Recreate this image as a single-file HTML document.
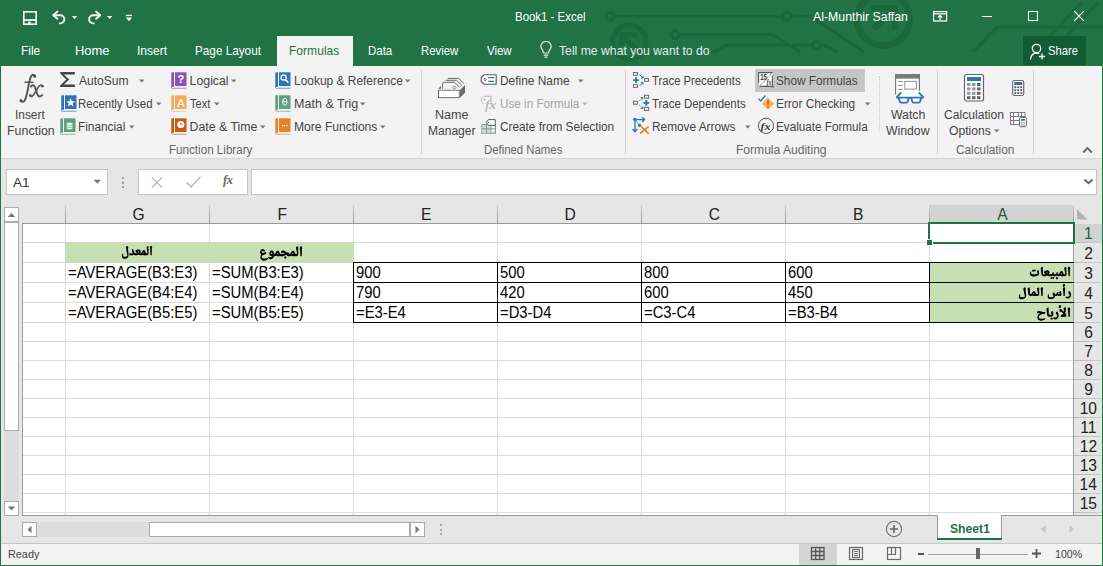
<!DOCTYPE html><html><head><meta charset="utf-8"><style>
html,body{margin:0;padding:0;}
body{width:1103px;height:566px;overflow:hidden;position:relative;font-family:"Liberation Sans",sans-serif;}
div{position:absolute;white-space:nowrap;}
</style></head><body>
<div style="left:0px;top:0px;width:1103px;height:566px;background:#fff"></div>
<div style="left:0px;top:0px;width:1103px;height:66px;background:#217346"></div>
<svg style="position:absolute;left:0px;top:0px;" width="1103" height="66" viewBox="0 0 1103 66"><g fill="none" stroke="#1c673c" stroke-width="3" stroke-linecap="butt">
<path d="M614 16.3 H783 M791.5 16.3 H811 L864 52"/>
<circle cx="610" cy="16.3" r="3.9"/>
<circle cx="787" cy="16.3" r="4.1"/>
<path d="M679 34.5 H772.5 L800 52"/>
<circle cx="675" cy="34.5" r="3.9"/>
<path d="M712.5 52 L726.5 45.3 H812.5 M820.5 45.3 H824.5 L837.5 52"/>
<circle cx="816.5" cy="45.3" r="4.1"/>
<path d="M973 52 L997 27.2 H1103"/>
<path d="M1050.5 35.5 L1082 2 M1067 35.5 L1098 2"/>
<circle cx="629.3" cy="42" r="16.8" stroke-width="5"/>
<circle cx="883.4" cy="19.4" r="26.2" stroke-width="6.8"/>
</g>
<g fill="#1c673c">
<path d="M619.4 32 H637 L637 37 H627.5 L640 49.5 L636.3 53.2 L624.5 41.2 V44.7 H619.4 Z"/>
<path d="M898 4.9 V29 H892 V15 L876 31 L871.5 26.5 L887.5 10.7 H871 V4.9 Z"/>
</g></svg>
<svg style="position:absolute;left:18px;top:6px;" width="100" height="24" viewBox="18 6 100 24"><rect x="23.8" y="11.8" width="12.4" height="12.4" fill="none" stroke="#fff" stroke-width="1.6"/>
<rect x="23" y="19.2" width="14" height="1.7" fill="#fff"/><rect x="28.2" y="21.6" width="2.4" height="2.6" fill="#fff"/>
<g fill="none" stroke="#f4f4f4" stroke-width="1.9" stroke-linecap="round" stroke-linejoin="round"><path d="M53.5 15.2 H60.3 A4.1 4.1 0 0 1 60.3 23.4 H59.8"/><path d="M57.4 11.6 L53.3 15.2 L57.4 18.8"/>
<path d="M100 15.2 H93.2 A4.1 4.1 0 0 0 93.2 23.4 H93.7"/><path d="M96.1 11.6 L100.2 15.2 L96.1 18.8"/></g>
<path d="M72 16 H77.2 L74.6 19 Z M107 16 H112.2 L109.6 19 Z" fill="#fff"/></svg>
<svg style="position:absolute;left:125px;top:14px;" width="8" height="8" viewBox="0 0 8 8"><rect x="1" y="0.8" width="6" height="1.3" fill="#fff"/><path d="M0.8 3.5 H7.2 L4 7.2 Z" fill="#fff"/></svg>
<div style="left:514.88px;top:10.67px;font-size:12.2px;line-height:12.2px;color:#ffffff;transform:scaleX(0.9381);transform-origin:0 0;">Book1 - Excel</div>
<div style="left:813.30px;top:10.67px;font-size:12.2px;line-height:12.2px;color:#ffffff;transform:scaleX(1.0111);transform-origin:0 0;">Al-Munthir Saffan</div>
<svg style="position:absolute;left:932px;top:10px;" width="16" height="12" viewBox="0 0 16 12"><g fill="none" stroke="#fff" stroke-width="1.2"><rect x="1.6" y="1.6" width="13" height="9.4"/><path d="M1.6 3.8 H14.6"/><path d="M8.1 10.5 V5.5 M6 7.5 L8.1 5.3 L10.2 7.5"/></g></svg>
<div style="left:982px;top:16px;width:10px;height:1px;background:#fff"></div>
<svg style="position:absolute;left:1027px;top:10px;" width="12" height="12" viewBox="0 0 12 12"><rect x="1.5" y="1.5" width="9" height="9" fill="none" stroke="#fff" stroke-width="1.1"/></svg>
<svg style="position:absolute;left:1073px;top:10px;" width="12" height="12" viewBox="0 0 12 12"><path d="M1.2 1.2 L10.8 10.8 M10.8 1.2 L1.2 10.8" stroke="#fff" stroke-width="1.2"/></svg>
<div style="left:21.35px;top:44.23px;font-size:13.2px;line-height:13.2px;color:#ffffff;transform:scaleX(0.8999);transform-origin:0 0;">File</div>
<div style="left:74.96px;top:44.23px;font-size:13.2px;line-height:13.2px;color:#ffffff;transform:scaleX(0.9823);transform-origin:0 0;">Home</div>
<div style="left:136.91px;top:44.23px;font-size:13.2px;line-height:13.2px;color:#ffffff;transform:scaleX(0.9135);transform-origin:0 0;">Insert</div>
<div style="left:195.06px;top:44.23px;font-size:13.2px;line-height:13.2px;color:#ffffff;transform:scaleX(0.8905);transform-origin:0 0;">Page Layout</div>
<div style="left:277px;top:36px;width:76px;height:31px;background:#f3f3f3"></div>
<div style="left:289.03px;top:44.23px;font-size:13.2px;line-height:13.2px;color:#217346;transform:scaleX(0.9154);transform-origin:0 0;">Formulas</div>
<div style="left:367.58px;top:44.23px;font-size:13.2px;line-height:13.2px;color:#ffffff;transform:scaleX(0.8695);transform-origin:0 0;">Data</div>
<div style="left:420.59px;top:44.23px;font-size:13.2px;line-height:13.2px;color:#ffffff;transform:scaleX(0.8594);transform-origin:0 0;">Review</div>
<div style="left:486.94px;top:44.23px;font-size:13.2px;line-height:13.2px;color:#ffffff;transform:scaleX(0.8688);transform-origin:0 0;">View</div>
<svg style="position:absolute;left:539px;top:41px;" width="14" height="18" viewBox="0 0 14 18"><g fill="none" stroke="#e8e8e8" stroke-width="1.2"><path d="M4.5 12 C4.5 9 1.8 8 1.8 5.6 A5.2 5.2 0 0 1 12.2 5.6 C12.2 8 9.5 9 9.5 12 Z"/><path d="M4.8 14.2 H9.2 M5.5 16.2 H8.5"/></g></svg>
<div style="left:558.76px;top:44.23px;font-size:13.2px;line-height:13.2px;color:#e3ebe6;transform:scaleX(0.9254);transform-origin:0 0;">Tell me what you want to do</div>
<div style="left:1023px;top:36px;width:63px;height:29px;background:#115c33"></div>
<svg style="position:absolute;left:1029px;top:43px;" width="18" height="18" viewBox="0 0 18 18"><g fill="none" stroke="#fff" stroke-width="1.3"><circle cx="7.5" cy="5.5" r="4.2"/><path d="M1.5 16.5 C2 12 4.5 10 7.5 10 C8.5 10 9.5 10.3 10.2 10.8"/><path d="M13 10.5 V16.5 M10 13.5 H16"/></g></svg>
<div style="left:1048.49px;top:45.33px;font-size:12.6px;line-height:12.6px;color:#ffffff;transform:scaleX(0.8921);transform-origin:0 0;">Share</div>
<div style="left:0px;top:66px;width:1103px;height:92px;background:#f3f3f3"></div>
<div style="left:0px;top:158px;width:1103px;height:1px;background:#d6d6d6"></div>
<svg style="position:absolute;left:14px;top:70px;" width="34" height="36" viewBox="14 70 34 36"><g fill="none" stroke="#555" stroke-linecap="round">
<path d="M35 76.3 C34.6 74.3 32.2 74.3 31.1 76.3 C29.8 78.8 29 83 28.1 88 C27.2 93 26.2 97.5 24.8 100.3 C23.8 102.2 21.6 102.3 20.7 100.8" stroke-width="1.9"/>
<path d="M25 82.3 H33" stroke-width="1.4"/>
<path d="M30.8 86.6 C32.3 84.6 34.2 84.8 35.1 87.6 L37.3 94.3 C38.2 96.9 40.2 97.3 42.2 95.2" stroke-width="1.9"/>
<path d="M42.6 86.2 C41.4 84.5 39.6 85 38.2 87.2 L34.3 93.6 C32.8 96.2 31.2 97.2 30.2 95.6" stroke-width="1.6"/>
</g><g fill="#555"><circle cx="34.6" cy="76.2" r="1.5"/><circle cx="21" cy="100.4" r="1.5"/><circle cx="42.4" cy="86.3" r="1.3"/><circle cx="30.3" cy="95.4" r="1.3"/></g></svg>
<div style="left:15.23px;top:109.49px;font-size:12.3px;line-height:12.3px;color:#444444;transform:scaleX(0.9668);transform-origin:0 0;">Insert</div>
<div style="left:6.50px;top:125.49px;font-size:12.3px;line-height:12.3px;color:#444444;transform:scaleX(1.0121);transform-origin:0 0;">Function</div>
<svg style="position:absolute;left:59px;top:71px;" width="18" height="17" viewBox="0 0 18 17"><path d="M1.2 1 H15.8 V3.4 H4.9 L10.2 8.5 L4.9 13.6 H15.8 V16 H1.2 V14.6 L7.3 8.5 L1.2 2.4 Z" fill="#444"/></svg>
<div style="left:79.40px;top:75.09px;font-size:12.3px;line-height:12.3px;color:#444444;transform:scaleX(0.9796);transform-origin:0 0;">AutoSum</div>
<svg style="position:absolute;left:138.5px;top:79px;" width="6" height="4" viewBox="0 0 6 4"><path d="M0 0.5 H5.5 L2.75 3.5 Z" fill="#777"/></svg>
<svg style="position:absolute;left:60.5px;top:94.5px;" width="16" height="17" viewBox="0 0 16 17"><path d="M0.3 1.2 Q0.3 0.3 1.2 0.3 H3 V14.8 H1.5 Q1 14.8 1 15.4 H15.5 V16.4 H1.3 Q0.3 16.4 0.3 15.2 Z" fill="#2e74b5"/>
<rect x="4" y="0.3" width="11.5" height="13.7" fill="#2e74b5"/><rect x="1" y="15.1" width="14.5" height="0.6" fill="#fff"/><path d="M9.7 3 L10.9 6.2 L14.2 6.2 L11.6 8.3 L12.5 11.5 L9.7 9.6 L6.9 11.5 L7.8 8.3 L5.2 6.2 L8.5 6.2 Z" fill="#fff"/></svg>
<div style="left:78.48px;top:97.99px;font-size:12.3px;line-height:12.3px;color:#444444;transform:scaleX(0.9319);transform-origin:0 0;">Recently Used</div>
<svg style="position:absolute;left:155.5px;top:102px;" width="6" height="4" viewBox="0 0 6 4"><path d="M0 0.5 H5.5 L2.75 3.5 Z" fill="#777"/></svg>
<svg style="position:absolute;left:59.8px;top:117.8px;" width="16" height="17" viewBox="0 0 16 17"><path d="M0.3 1.2 Q0.3 0.3 1.2 0.3 H3 V14.8 H1.5 Q1 14.8 1 15.4 H15.5 V16.4 H1.3 Q0.3 16.4 0.3 15.2 Z" fill="#5d9f80"/>
<rect x="4" y="0.3" width="11.5" height="13.7" fill="#5d9f80"/><rect x="1" y="15.1" width="14.5" height="0.6" fill="#fff"/><g fill="#fff" stroke="#5d9f80" stroke-width="0.7"><ellipse cx="9.7" cy="10" rx="3.4" ry="1.6"/><ellipse cx="9.7" cy="7.9" rx="3.4" ry="1.6"/><ellipse cx="9.7" cy="5.8" rx="3.4" ry="1.6"/></g></svg>
<div style="left:78.45px;top:121.29px;font-size:12.3px;line-height:12.3px;color:#444444;transform:scaleX(0.9617);transform-origin:0 0;">Financial</div>
<svg style="position:absolute;left:128.5px;top:125px;" width="6" height="4" viewBox="0 0 6 4"><path d="M0 0.5 H5.5 L2.75 3.5 Z" fill="#777"/></svg>
<svg style="position:absolute;left:170.8px;top:71.5px;" width="16" height="17" viewBox="0 0 16 17"><path d="M0.3 1.2 Q0.3 0.3 1.2 0.3 H3 V14.8 H1.5 Q1 14.8 1 15.4 H15.5 V16.4 H1.3 Q0.3 16.4 0.3 15.2 Z" fill="#8655b0"/>
<rect x="4" y="0.3" width="11.5" height="13.7" fill="#8655b0"/><rect x="1" y="15.1" width="14.5" height="0.6" fill="#fff"/><text x="9.8" y="11.3" font-family="Liberation Sans" font-weight="bold" font-size="11" fill="#fff" text-anchor="middle">?</text></svg>
<div style="left:189.62px;top:75.09px;font-size:12.3px;line-height:12.3px;color:#444444;">Logical</div>
<svg style="position:absolute;left:230.5px;top:79px;" width="6" height="4" viewBox="0 0 6 4"><path d="M0 0.5 H5.5 L2.75 3.5 Z" fill="#777"/></svg>
<svg style="position:absolute;left:170.8px;top:94.5px;" width="16" height="17" viewBox="0 0 16 17"><path d="M0.3 1.2 Q0.3 0.3 1.2 0.3 H3 V14.8 H1.5 Q1 14.8 1 15.4 H15.5 V16.4 H1.3 Q0.3 16.4 0.3 15.2 Z" fill="#f0ac5a"/>
<rect x="4" y="0.3" width="11.5" height="13.7" fill="#f0ac5a"/><rect x="1" y="15.1" width="14.5" height="0.6" fill="#fff"/><text x="9.8" y="12" font-family="Liberation Sans" font-size="11" fill="#fff" text-anchor="middle">A</text></svg>
<div style="left:190.38px;top:97.99px;font-size:12.3px;line-height:12.3px;color:#444444;transform:scaleX(0.8963);transform-origin:0 0;">Text</div>
<svg style="position:absolute;left:213.5px;top:102px;" width="6" height="4" viewBox="0 0 6 4"><path d="M0 0.5 H5.5 L2.75 3.5 Z" fill="#777"/></svg>
<svg style="position:absolute;left:170.8px;top:117.8px;" width="16" height="17" viewBox="0 0 16 17"><path d="M0.3 1.2 Q0.3 0.3 1.2 0.3 H3 V14.8 H1.5 Q1 14.8 1 15.4 H15.5 V16.4 H1.3 Q0.3 16.4 0.3 15.2 Z" fill="#c55a16"/>
<rect x="4" y="0.3" width="11.5" height="13.7" fill="#c55a16"/><rect x="1" y="15.1" width="14.5" height="0.6" fill="#fff"/><circle cx="9.8" cy="6.5" r="3.6" fill="#fff"/><path d="M9.8 4.3 V6.7 H11.6" stroke="#c55a16" stroke-width="0.9" fill="none"/></svg>
<div style="left:189.61px;top:121.29px;font-size:12.3px;line-height:12.3px;color:#444444;">Date &amp; Time</div>
<svg style="position:absolute;left:259.5px;top:125px;" width="6" height="4" viewBox="0 0 6 4"><path d="M0 0.5 H5.5 L2.75 3.5 Z" fill="#777"/></svg>
<svg style="position:absolute;left:274.8px;top:71.5px;" width="16" height="17" viewBox="0 0 16 17"><path d="M0.3 1.2 Q0.3 0.3 1.2 0.3 H3 V14.8 H1.5 Q1 14.8 1 15.4 H15.5 V16.4 H1.3 Q0.3 16.4 0.3 15.2 Z" fill="#2e74b5"/>
<rect x="4" y="0.3" width="11.5" height="13.7" fill="#2e74b5"/><rect x="1" y="15.1" width="14.5" height="0.6" fill="#fff"/><circle cx="8.6" cy="5.6" r="2.6" fill="none" stroke="#fff" stroke-width="1.3"/><path d="M10.4 7.6 L13.4 10.6" stroke="#fff" stroke-width="1.6"/></svg>
<div style="left:293.64px;top:75.09px;font-size:12.3px;line-height:12.3px;color:#444444;transform:scaleX(0.9707);transform-origin:0 0;">Lookup &amp; Reference</div>
<svg style="position:absolute;left:404.5px;top:79px;" width="6" height="4" viewBox="0 0 6 4"><path d="M0 0.5 H5.5 L2.75 3.5 Z" fill="#777"/></svg>
<svg style="position:absolute;left:274.8px;top:94.5px;" width="16" height="17" viewBox="0 0 16 17"><path d="M0.3 1.2 Q0.3 0.3 1.2 0.3 H3 V14.8 H1.5 Q1 14.8 1 15.4 H15.5 V16.4 H1.3 Q0.3 16.4 0.3 15.2 Z" fill="#5d9f80"/>
<rect x="4" y="0.3" width="11.5" height="13.7" fill="#5d9f80"/><rect x="1" y="15.1" width="14.5" height="0.6" fill="#fff"/><ellipse cx="9.8" cy="6.8" rx="2.1" ry="3.6" fill="none" stroke="#fff" stroke-width="1"/><path d="M7.8 6.8 H11.8" stroke="#fff" stroke-width="0.9"/></svg>
<div style="left:293.60px;top:97.99px;font-size:12.3px;line-height:12.3px;color:#444444;transform:scaleX(1.0208);transform-origin:0 0;">Math &amp; Trig</div>
<svg style="position:absolute;left:359.5px;top:102px;" width="6" height="4" viewBox="0 0 6 4"><path d="M0 0.5 H5.5 L2.75 3.5 Z" fill="#777"/></svg>
<svg style="position:absolute;left:274.8px;top:117.8px;" width="16" height="17" viewBox="0 0 16 17"><path d="M0.3 1.2 Q0.3 0.3 1.2 0.3 H3 V14.8 H1.5 Q1 14.8 1 15.4 H15.5 V16.4 H1.3 Q0.3 16.4 0.3 15.2 Z" fill="#e6812c"/>
<rect x="4" y="0.3" width="11.5" height="13.7" fill="#e6812c"/><rect x="1" y="15.1" width="14.5" height="0.6" fill="#fff"/><rect x="7" y="7" width="1.2" height="1.2" fill="#fff"/><rect x="9.2" y="7" width="1.2" height="1.2" fill="#fff"/><rect x="11.4" y="7" width="1.2" height="1.2" fill="#fff"/></svg>
<div style="left:293.63px;top:121.29px;font-size:12.3px;line-height:12.3px;color:#444444;transform:scaleX(0.9840);transform-origin:0 0;">More Functions</div>
<svg style="position:absolute;left:379.5px;top:125px;" width="6" height="4" viewBox="0 0 6 4"><path d="M0 0.5 H5.5 L2.75 3.5 Z" fill="#777"/></svg>
<div style="left:168.57px;top:144.49px;font-size:12.3px;line-height:12.3px;color:#666666;transform:scaleX(0.9460);transform-origin:0 0;">Function Library</div>
<div style="left:421px;top:70px;width:1px;height:84px;background:#d4d4d4"></div>
<svg style="position:absolute;left:434px;top:74px;" width="34" height="26" viewBox="434 74 34 26"><g fill="none" stroke="#666" stroke-width="1">
<path d="M447.6 78.4 H458.8 L463.9 83.7"/>
<path d="M445.7 80.3 H456.5 L462 85.6"/>
<path d="M442.5 88.7 V84.2 Q442.5 82.3 444.4 82.3 H454.7 L459.6 87.5"/>
<rect x="438.5" y="90.3" width="20.6" height="7.3"/>
<path d="M452.9 87.5 L454.4 86 L455.9 87.5 L454.4 89 Z" stroke-width="0.8"/>
</g>
<rect x="439" y="90.8" width="19.6" height="6.3" fill="#fff"/>
<path d="M459.9 90 L465 85 V92.8 L459.9 97.8 Z" fill="#6a6a6a"/>
<path d="M438.1 88.8 L441 86 V88.8 Z" fill="#666"/></svg>
<div style="left:434.99px;top:109.29px;font-size:12.3px;line-height:12.3px;color:#444444;transform:scaleX(1.0222);transform-origin:0 0;">Name</div>
<div style="left:427.64px;top:124.89px;font-size:12.3px;line-height:12.3px;color:#444444;transform:scaleX(0.9786);transform-origin:0 0;">Manager</div>
<svg style="position:absolute;left:478px;top:72px;" width="22" height="16" viewBox="478 72 22 16"><path d="M484 74.8 H496.2 V84.2 H484 L481.2 81.5 V77.5 Z" fill="#fff" stroke="#5a5a5a" stroke-width="1.1" stroke-linejoin="round"/><circle cx="485.2" cy="79.5" r="1.1" fill="none" stroke="#5a5a5a" stroke-width="0.9"/><path d="M488.2 77.7 H494.2 M488.2 81.3 H494.2" stroke="#2e74b5" stroke-width="1.2"/></svg>
<div style="left:499.65px;top:75.09px;font-size:12.3px;line-height:12.3px;color:#444444;transform:scaleX(0.9688);transform-origin:0 0;">Define Name</div>
<svg style="position:absolute;left:578.3px;top:79px;" width="6" height="4" viewBox="0 0 6 4"><path d="M0 0.5 H5.5 L2.75 3.5 Z" fill="#777"/></svg>
<svg style="position:absolute;left:478px;top:94px;" width="22" height="18" viewBox="478 94 22 18"><path d="M491 104 V96.3 H484 L481.3 99 V101.5 L483.5 103.8" fill="none" stroke="#b4b4b4" stroke-width="1"/><circle cx="484.6" cy="99.5" r="0.9" fill="#b4b4b4"/><text x="485" y="108.6" font-family="Liberation Serif" font-style="italic" font-size="12.5" textLength="11" lengthAdjust="spacingAndGlyphs" fill="#a8a8a8">fx</text></svg>
<div style="left:499.72px;top:97.99px;font-size:12.3px;line-height:12.3px;color:#a6a6a6;transform:scaleX(0.9506);transform-origin:0 0;">Use in Formula</div>
<svg style="position:absolute;left:582px;top:102px;" width="6" height="4" viewBox="0 0 6 4"><path d="M0 0.5 H5.5 L2.75 3.5 Z" fill="#b8b8b8"/></svg>
<svg style="position:absolute;left:478px;top:117px;" width="22" height="19" viewBox="478 117 22 19"><rect x="482" y="124.8" width="13.3" height="8.3" fill="#fff" stroke="#777" stroke-width="1"/>
<rect x="482.5" y="125.3" width="8.5" height="7.3" fill="#c6e2d8"/>
<path d="M482 128.9 H495.3 M486.5 124.8 V133.1 M491 124.8 V133.1" stroke="#8a8a8a" stroke-width="0.9" fill="none"/>
<path d="M488.5 119.6 H495.2 V125.3 H488.5 L486.3 122.5 Z" fill="#fff" stroke="#555" stroke-width="1"/><circle cx="488.4" cy="122.4" r="0.7" fill="#555"/></svg>
<div style="left:500.01px;top:121.29px;font-size:12.3px;line-height:12.3px;color:#444444;transform:scaleX(0.9601);transform-origin:0 0;">Create from Selection</div>
<div style="left:483.59px;top:144.49px;font-size:12.3px;line-height:12.3px;color:#666666;transform:scaleX(0.9240);transform-origin:0 0;">Defined Names</div>
<div style="left:625px;top:70px;width:1px;height:84px;background:#d4d4d4"></div>
<svg style="position:absolute;left:630px;top:70px;" width="22" height="20" viewBox="630 70 22 20"><g fill="none" stroke="#6a6a6a" stroke-width="1"><rect x="633.5" y="72.5" width="4" height="2.8"/><rect x="633.5" y="84.6" width="4" height="2.8"/><rect x="644.7" y="78.6" width="3.8" height="2.8"/></g>
<path d="M636.1 77.3 V82.9 M633.3 80.1 H638.9" stroke="#2e74b5" stroke-width="1.9"/>
<g fill="none" stroke="#2e74b5" stroke-width="1"><path d="M639.5 74.5 L643 78 M643 78 V75.8 M643 78 H640.8 M639.5 86 L643 82.5 M643 82.5 V84.7 M643 82.5 H640.8"/></g></svg>
<div style="left:652.47px;top:75.09px;font-size:12.3px;line-height:12.3px;color:#444444;transform:scaleX(0.9172);transform-origin:0 0;">Trace Precedents</div>
<svg style="position:absolute;left:630px;top:93px;" width="22" height="20" viewBox="630 93 22 20"><g fill="none" stroke="#6a6a6a" stroke-width="1"><rect x="633.5" y="101.2" width="4" height="3"/><rect x="644.5" y="95.3" width="4.2" height="2.8"/><rect x="644.5" y="107.4" width="4.2" height="3"/></g>
<path d="M646.3 100 V105.8 M643.4 102.9 H649.2" stroke="#2e74b5" stroke-width="1.9"/>
<g fill="none" stroke="#2e74b5" stroke-width="1" stroke-dasharray="1.3 0.8"><path d="M639.3 101 L642.8 97.5 M639.3 105 L642.8 108.5"/></g>
<path d="M642.8 97.5 V99.7 M642.8 97.5 H640.6 M642.8 108.5 V106.3 M642.8 108.5 H640.6" stroke="#2e74b5" stroke-width="1" fill="none"/></svg>
<div style="left:652.47px;top:97.99px;font-size:12.3px;line-height:12.3px;color:#444444;transform:scaleX(0.9294);transform-origin:0 0;">Trace Dependents</div>
<svg style="position:absolute;left:630px;top:115px;" width="22" height="22" viewBox="630 115 22 22"><circle cx="635" cy="119.6" r="1.8" fill="#2e74b5"/><circle cx="639.5" cy="125.3" r="1.6" fill="#2e74b5"/>
<path d="M635 119.6 V131.5 M632.6 129 L635 131.7 L637.4 129 M635 119.6 H644.5 M642 117.2 L644.7 119.6 L642 122" fill="none" stroke="#2e74b5" stroke-width="1.3"/>
<path d="M635.5 120.3 L639 124.6" stroke="#5d9f80" stroke-width="0.9"/>
<path d="M640 133.3 L648.6 126.6 M640.8 126.3 L648.6 133.6" stroke="#e07b1f" stroke-width="1.5"/></svg>
<div style="left:651.75px;top:121.29px;font-size:12.3px;line-height:12.3px;color:#444444;transform:scaleX(0.9623);transform-origin:0 0;">Remove Arrows</div>
<svg style="position:absolute;left:744.5px;top:125px;" width="6" height="4" viewBox="0 0 6 4"><path d="M0 0.5 H5.5 L2.75 3.5 Z" fill="#777"/></svg>
<div style="left:755px;top:69px;width:110px;height:23px;background:#c6c6c6"></div>
<svg style="position:absolute;left:755px;top:70px;" width="22" height="20" viewBox="755 70 22 20"><rect x="759" y="73" width="13.5" height="13.5" fill="#fff"/><g fill="none" stroke="#5a5a5a" stroke-width="1.1"><path d="M758.6 82.8 V72.6 H772.5 M772.4 75.6 V86.4 H759.6"/></g>
<path d="M772.4 72.6 L759.4 86.3" stroke="#444" stroke-width="0.9" stroke-dasharray="1.1 0.9"/>
<text x="760.2" y="80.4" font-family="Liberation Sans" font-weight="bold" font-size="8.4" textLength="6.8" lengthAdjust="spacingAndGlyphs" fill="#404040">15</text>
<text x="766.6" y="84.8" font-family="Liberation Serif" font-style="italic" font-weight="bold" font-size="7.5" textLength="5" lengthAdjust="spacingAndGlyphs" fill="#404040">fx</text>
<rect x="772.3" y="86.3" width="1.4" height="1.4" fill="#555"/></svg>
<div style="left:776.47px;top:75.09px;font-size:12.3px;line-height:12.3px;color:#444444;transform:scaleX(0.9569);transform-origin:0 0;">Show Formulas</div>
<svg style="position:absolute;left:757px;top:94px;" width="18" height="16" viewBox="0 0 18 16"><path d="M11 3.8 L17 9.8 L11 15.8 L5 9.8 Z" fill="#f4ad58"/><rect x="10.3" y="6" width="1.4" height="5" fill="#c4561a"/><rect x="10.3" y="12" width="1.4" height="1.3" fill="#c4561a"/>
<path d="M1.5 4.8 L3.8 7 L8.2 1.5" fill="none" stroke="#2e74b5" stroke-width="1.4"/></svg>
<div style="left:776.05px;top:97.99px;font-size:12.3px;line-height:12.3px;color:#444444;transform:scaleX(0.9649);transform-origin:0 0;">Error Checking</div>
<svg style="position:absolute;left:864.5px;top:102px;" width="6" height="4" viewBox="0 0 6 4"><path d="M0 0.5 H5.5 L2.75 3.5 Z" fill="#777"/></svg>
<svg style="position:absolute;left:757px;top:117px;" width="18" height="18" viewBox="0 0 18 18"><circle cx="9" cy="8.8" r="7.6" fill="none" stroke="#555" stroke-width="1"/><text x="3.6" y="12.8" font-family="Liberation Serif" font-style="italic" font-weight="bold" font-size="11" textLength="10" lengthAdjust="spacingAndGlyphs" fill="#3a3a3a">fx</text></svg>
<div style="left:776.06px;top:121.29px;font-size:12.3px;line-height:12.3px;color:#444444;transform:scaleX(0.9519);transform-origin:0 0;">Evaluate Formula</div>
<div style="left:735.53px;top:144.49px;font-size:12.3px;line-height:12.3px;color:#666666;transform:scaleX(0.9813);transform-origin:0 0;">Formula Auditing</div>
<div style="left:879px;top:76px;width:0;height:54px;border-left:1px dotted #c8c8c8"></div>
<svg style="position:absolute;left:890px;top:70px;" width="40" height="36" viewBox="890 70 40 36"><rect x="895.5" y="74" width="24" height="23" fill="#fff"/><rect x="895" y="74" width="25" height="4.6" fill="#7a7a7a"/>
<path d="M895.6 74 V94.5 M919.4 74 V90.7" stroke="#777" stroke-width="1.2" fill="none"/>
<path d="M898 81.5 H902.7 M898 85.4 H902.7 M898 89.4 H902.7" stroke="#8a8a8a" stroke-width="1" fill="none"/>
<rect x="904.8" y="81.4" width="11.6" height="7.7" fill="none" stroke="#9a9a9a" stroke-width="1.1"/>
<g stroke="#2e74b5" stroke-width="1.8" fill="#fff" stroke-linejoin="round"><path d="M898.6 97.6 L899.9 101.6 Q900.3 102.6 901.2 102.6 H906.4 Q907.3 102.6 907.6 101.6 L908.9 97.6"/><path d="M911.1 97.6 L912.4 101.6 Q912.8 102.6 913.7 102.6 H918.9 Q919.8 102.6 920.1 101.6 L921.4 97.6"/>
<path d="M896.3 97.6 H923.7 M896.3 97.6 L901.3 92.3 M923.7 97.6 L918.7 92.3" fill="none"/></g></svg>
<div style="left:890.94px;top:109.29px;font-size:12.3px;line-height:12.3px;color:#444444;">Watch</div>
<div style="left:886.44px;top:125.09px;font-size:12.3px;line-height:12.3px;color:#444444;transform:scaleX(0.9948);transform-origin:0 0;">Window</div>
<div style="left:937px;top:70px;width:1px;height:84px;background:#d4d4d4"></div>
<svg style="position:absolute;left:963px;top:73px;" width="22" height="30" viewBox="0 0 22 30"><rect x="1.5" y="1.5" width="19" height="26.5" rx="2" fill="#fff" stroke="#666" stroke-width="1.2"/>
<rect x="4" y="4" width="14" height="4" fill="#2e74b5"/>
<g fill="#777"><rect x="4" y="10.0" width="3.5" height="3" fill="#999"/><rect x="9" y="10.0" width="3.5" height="3" fill="#999"/><rect x="14" y="10.0" width="3.5" height="3" fill="#666"/><rect x="4" y="14.4" width="3.5" height="3" fill="#999"/><rect x="9" y="14.4" width="3.5" height="3" fill="#999"/><rect x="14" y="14.4" width="3.5" height="3" fill="#666"/><rect x="4" y="18.8" width="3.5" height="3" fill="#999"/><rect x="9" y="18.8" width="3.5" height="3" fill="#999"/><rect x="14" y="18.8" width="3.5" height="3" fill="#666"/><rect x="4" y="23.2" width="3.5" height="3" fill="#666"/><rect x="9" y="23.2" width="3.5" height="3" fill="#666"/><rect x="14" y="23.2" width="3.5" height="3" fill="#666"/></g></svg>
<div style="left:943.99px;top:109.29px;font-size:12.3px;line-height:12.3px;color:#444444;transform:scaleX(0.9870);transform-origin:0 0;">Calculation</div>
<div style="left:949.25px;top:125.09px;font-size:12.3px;line-height:12.3px;color:#444444;transform:scaleX(0.9858);transform-origin:0 0;">Options</div>
<svg style="position:absolute;left:994px;top:129px;" width="6" height="4" viewBox="0 0 6 4"><path d="M0 0.5 H5.5 L2.75 3.5 Z" fill="#777"/></svg>
<svg style="position:absolute;left:1008px;top:77px;" width="20" height="52" viewBox="1008 77 20 52"><rect x="1012.7" y="80.5" width="11" height="15" rx="1.5" fill="#fff" stroke="#6a6a6a" stroke-width="1.2"/><rect x="1014.3" y="82" width="7.9" height="3" fill="#2e74b5"/><rect x="1014.40" y="86.30" width="1.9" height="1.9" fill="#5a5a5a"/><rect x="1017.35" y="86.30" width="1.9" height="1.9" fill="#5a5a5a"/><rect x="1020.30" y="86.30" width="1.9" height="1.9" fill="#5a5a5a"/><rect x="1014.40" y="89.20" width="1.9" height="1.9" fill="#5a5a5a"/><rect x="1017.35" y="89.20" width="1.9" height="1.9" fill="#5a5a5a"/><rect x="1020.30" y="89.20" width="1.9" height="1.9" fill="#5a5a5a"/><rect x="1014.40" y="92.10" width="1.9" height="1.9" fill="#5a5a5a"/><rect x="1017.35" y="92.10" width="1.9" height="1.9" fill="#5a5a5a"/><rect x="1020.30" y="92.10" width="1.9" height="1.9" fill="#5a5a5a"/>
<rect x="1010.5" y="112.5" width="14.5" height="12" fill="#fff" stroke="#7a7a7a" stroke-width="1"/>
<path d="M1010.5 116.5 H1025 M1010.5 120.5 H1019 M1013.5 112.5 V124.5 M1018.5 112.5 V117 M1021.5 112.5 V117" stroke="#7a7a7a" stroke-width="1" fill="none"/>
<rect x="1019.5" y="117.5" width="6.8" height="9.2" rx="1" fill="#fff" stroke="#666" stroke-width="1"/><rect x="1021" y="119" width="3.8" height="1.8" fill="#2e74b5"/>
<g fill="#777"><rect x="1021" y="122.2" width="1.3" height="1.3"/><rect x="1023.4" y="122.2" width="1.3" height="1.3"/><rect x="1021" y="124.4" width="1.3" height="1.3"/><rect x="1023.4" y="124.4" width="1.3" height="1.3"/></g></svg>
<div style="left:956.01px;top:144.49px;font-size:12.3px;line-height:12.3px;color:#666666;transform:scaleX(0.9585);transform-origin:0 0;">Calculation</div>
<div style="left:1033px;top:70px;width:1px;height:84px;background:#d4d4d4"></div>
<svg style="position:absolute;left:1082px;top:146px;" width="11" height="8" viewBox="0 0 11 8"><path d="M1.2 6.5 L5.5 2.2 L9.8 6.5" fill="none" stroke="#666" stroke-width="1.9"/></svg>
<div style="left:1px;top:159px;width:1101px;height:384px;background:#e6e6e6"></div>
<div style="left:6px;top:169px;width:102px;height:26px;background:#fff;box-sizing:border-box;border:1px solid #c6c6c6"></div>
<div style="left:13.20px;top:176.50px;font-size:12.4px;line-height:12.4px;color:#333;transform:scaleX(1.0981);transform-origin:0 0;">A1</div>
<svg style="position:absolute;left:93px;top:179px;" width="9" height="6" viewBox="0 0 9 6"><path d="M0.5 0.8 H8 L4.25 4.8 Z" fill="#777"/></svg>
<div style="left:122px;top:177px;width:2px;height:2px;background:#a0a0a0"></div>
<div style="left:122px;top:181.5px;width:2px;height:2px;background:#a0a0a0"></div>
<div style="left:122px;top:186px;width:2px;height:2px;background:#a0a0a0"></div>
<div style="left:138px;top:169px;width:110px;height:26px;background:#fff;box-sizing:border-box;border:1px solid #c6c6c6"></div>
<svg style="position:absolute;left:150px;top:176px;" width="14" height="13" viewBox="0 0 14 13"><path d="M2 1.5 L12 11.5 M12 1.5 L2 11.5" stroke="#bdbdbd" stroke-width="1.4"/></svg>
<svg style="position:absolute;left:185px;top:175px;" width="17" height="14" viewBox="0 0 17 14"><path d="M1.8 7.5 L6 12 L15.5 1.8" fill="none" stroke="#bdbdbd" stroke-width="1.6"/></svg>
<div style="left:223px;top:174px;font-family:'Liberation Serif',serif;font-style:italic;font-weight:bold;font-size:12.5px;line-height:12.5px;color:#666;letter-spacing:-0.5px">fx</div>
<div style="left:251px;top:169px;width:846px;height:26px;background:#fff;box-sizing:border-box;border:1px solid #c6c6c6"></div>
<svg style="position:absolute;left:1083px;top:178px;" width="11" height="7" viewBox="0 0 11 7"><path d="M1.5 1.5 L5.5 5.2 L9.5 1.5" fill="none" stroke="#666" stroke-width="1.9"/></svg>
<div style="left:4px;top:207px;width:15px;height:15px;background:#fff;box-sizing:border-box;border:1px solid #ababab"></div>
<svg style="position:absolute;left:4px;top:207px;" width="15" height="15" viewBox="0 0 15 15"><path d="M3.8 10 H11.2 L7.5 6 Z" fill="#777"/></svg>
<div style="left:4px;top:222px;width:15px;height:209px;background:#fff;box-sizing:border-box;border:1px solid #ababab"></div>
<div style="left:4px;top:431px;width:15px;height:70px;background:#dcdddd"></div>
<div style="left:4px;top:501px;width:15px;height:15px;background:#fff;box-sizing:border-box;border:1px solid #ababab"></div>
<svg style="position:absolute;left:4px;top:501px;" width="15" height="15" viewBox="0 0 15 15"><path d="M3.8 5.5 H11.2 L7.5 9.5 Z" fill="#777"/></svg>
<div style="left:23px;top:224px;width:1050px;height:291px;background:#fff"></div>
<div style="left:65px;top:205px;width:1px;height:18px;background:linear-gradient(#d0d0d0,#999)"></div>
<div style="left:209px;top:205px;width:1px;height:18px;background:linear-gradient(#d0d0d0,#999)"></div>
<div style="left:353px;top:205px;width:1px;height:18px;background:linear-gradient(#d0d0d0,#999)"></div>
<div style="left:497px;top:205px;width:1px;height:18px;background:linear-gradient(#d0d0d0,#999)"></div>
<div style="left:641px;top:205px;width:1px;height:18px;background:linear-gradient(#d0d0d0,#999)"></div>
<div style="left:785px;top:205px;width:1px;height:18px;background:linear-gradient(#d0d0d0,#999)"></div>
<div style="left:929px;top:205px;width:1px;height:18px;background:linear-gradient(#d0d0d0,#999)"></div>
<div style="left:1073px;top:205px;width:1px;height:18px;background:linear-gradient(#d0d0d0,#999)"></div>
<div style="left:930px;top:205px;width:143px;height:18px;background:#d3d3d3"></div>
<div style="left:1073px;top:205px;width:1px;height:18px;background:linear-gradient(#d0d0d0,#999)"></div>
<div style="left:22px;top:223px;width:1052px;height:1px;background:#9a9a9a"></div>
<div style="left:22px;top:223px;width:1px;height:293px;background:#9a9a9a"></div>
<div style="left:22px;top:515px;width:1080px;height:1px;background:#9a9a9a"></div>
<div style="left:65px;top:224px;width:1px;height:291px;background:#dadcdd"></div>
<div style="left:209px;top:224px;width:1px;height:291px;background:#dadcdd"></div>
<div style="left:353px;top:224px;width:1px;height:291px;background:#dadcdd"></div>
<div style="left:497px;top:224px;width:1px;height:291px;background:#dadcdd"></div>
<div style="left:641px;top:224px;width:1px;height:291px;background:#dadcdd"></div>
<div style="left:785px;top:224px;width:1px;height:291px;background:#dadcdd"></div>
<div style="left:929px;top:224px;width:1px;height:291px;background:#dadcdd"></div>
<div style="left:23px;top:242px;width:1050px;height:1px;background:#dadcdd"></div>
<div style="left:23px;top:262px;width:1050px;height:1px;background:#dadcdd"></div>
<div style="left:23px;top:282px;width:1050px;height:1px;background:#dadcdd"></div>
<div style="left:23px;top:302px;width:1050px;height:1px;background:#dadcdd"></div>
<div style="left:23px;top:322px;width:1050px;height:1px;background:#dadcdd"></div>
<div style="left:23px;top:341px;width:1050px;height:1px;background:#dadcdd"></div>
<div style="left:23px;top:360px;width:1050px;height:1px;background:#dadcdd"></div>
<div style="left:23px;top:379px;width:1050px;height:1px;background:#dadcdd"></div>
<div style="left:23px;top:398px;width:1050px;height:1px;background:#dadcdd"></div>
<div style="left:23px;top:417px;width:1050px;height:1px;background:#dadcdd"></div>
<div style="left:23px;top:436px;width:1050px;height:1px;background:#dadcdd"></div>
<div style="left:23px;top:455px;width:1050px;height:1px;background:#dadcdd"></div>
<div style="left:23px;top:474px;width:1050px;height:1px;background:#dadcdd"></div>
<div style="left:23px;top:493px;width:1050px;height:1px;background:#dadcdd"></div>
<div style="left:23px;top:512px;width:1050px;height:1px;background:#dadcdd"></div>
<div style="left:1073px;top:224px;width:1px;height:291px;background:#9a9a9a"></div>
<div style="left:1074px;top:224px;width:28px;height:19px;background:#d3d3d3"></div>
<div style="left:1074px;top:242px;width:28px;height:1px;background:linear-gradient(90deg,#b8b8b8,#d0d0d0)"></div>
<div style="left:1074px;top:262px;width:28px;height:1px;background:linear-gradient(90deg,#b8b8b8,#d0d0d0)"></div>
<div style="left:1074px;top:282px;width:28px;height:1px;background:linear-gradient(90deg,#b8b8b8,#d0d0d0)"></div>
<div style="left:1074px;top:302px;width:28px;height:1px;background:linear-gradient(90deg,#b8b8b8,#d0d0d0)"></div>
<div style="left:1074px;top:322px;width:28px;height:1px;background:linear-gradient(90deg,#b8b8b8,#d0d0d0)"></div>
<div style="left:1074px;top:341px;width:28px;height:1px;background:linear-gradient(90deg,#b8b8b8,#d0d0d0)"></div>
<div style="left:1074px;top:360px;width:28px;height:1px;background:linear-gradient(90deg,#b8b8b8,#d0d0d0)"></div>
<div style="left:1074px;top:379px;width:28px;height:1px;background:linear-gradient(90deg,#b8b8b8,#d0d0d0)"></div>
<div style="left:1074px;top:398px;width:28px;height:1px;background:linear-gradient(90deg,#b8b8b8,#d0d0d0)"></div>
<div style="left:1074px;top:417px;width:28px;height:1px;background:linear-gradient(90deg,#b8b8b8,#d0d0d0)"></div>
<div style="left:1074px;top:436px;width:28px;height:1px;background:linear-gradient(90deg,#b8b8b8,#d0d0d0)"></div>
<div style="left:1074px;top:455px;width:28px;height:1px;background:linear-gradient(90deg,#b8b8b8,#d0d0d0)"></div>
<div style="left:1074px;top:474px;width:28px;height:1px;background:linear-gradient(90deg,#b8b8b8,#d0d0d0)"></div>
<div style="left:1074px;top:493px;width:28px;height:1px;background:linear-gradient(90deg,#b8b8b8,#d0d0d0)"></div>
<div style="left:1074px;top:512px;width:28px;height:1px;background:linear-gradient(90deg,#b8b8b8,#d0d0d0)"></div>
<svg style="position:absolute;left:1076px;top:208px;" width="13" height="13" viewBox="0 0 13 13"><path d="M1 1 L11.5 11.5 H1 Z" fill="#b4b4b4"/></svg>
<div style="left:65px;top:242px;width:289px;height:21px;background:#c6e0b4"></div>
<div style="left:930px;top:263px;width:143px;height:59px;background:#c6e0b4"></div>
<div style="left:353px;top:262px;width:721px;height:1px;background:#000"></div>
<div style="left:353px;top:282px;width:721px;height:1px;background:#000"></div>
<div style="left:353px;top:302px;width:721px;height:1px;background:#000"></div>
<div style="left:353px;top:322px;width:721px;height:1px;background:#000"></div>
<div style="left:353px;top:262px;width:1px;height:61px;background:#000"></div>
<div style="left:497px;top:262px;width:1px;height:61px;background:#000"></div>
<div style="left:641px;top:262px;width:1px;height:61px;background:#000"></div>
<div style="left:785px;top:262px;width:1px;height:61px;background:#000"></div>
<div style="left:929px;top:262px;width:1px;height:61px;background:#000"></div>
<div style="left:928px;top:222px;width:147px;height:22px;box-sizing:border-box;border:2px solid #217346"></div>
<div style="left:927px;top:240px;width:5px;height:5px;background:#217346;outline:1px solid #fff"></div>
<div style="left:132.61px;top:206.59px;font-size:15.6px;line-height:15.6px;color:#222;">G</div>
<div style="left:277.43px;top:206.59px;font-size:15.6px;line-height:15.6px;color:#222;">F</div>
<div style="left:421.00px;top:206.59px;font-size:15.6px;line-height:15.6px;color:#222;">E</div>
<div style="left:564.61px;top:206.59px;font-size:15.6px;line-height:15.6px;color:#222;">D</div>
<div style="left:708.77px;top:206.59px;font-size:15.6px;line-height:15.6px;color:#222;">C</div>
<div style="left:853.08px;top:206.59px;font-size:15.6px;line-height:15.6px;color:#222;">B</div>
<div style="left:997.31px;top:206.59px;font-size:15.6px;line-height:15.6px;color:#1e5c38;">A</div>
<div style="left:1084.04px;top:225.79px;font-size:15.6px;line-height:15.6px;color:#1e5c38;">1</div>
<div style="left:1084.27px;top:245.79px;font-size:15.6px;line-height:15.6px;color:#222;">2</div>
<div style="left:1084.31px;top:265.79px;font-size:15.6px;line-height:15.6px;color:#222;">3</div>
<div style="left:1084.31px;top:285.79px;font-size:15.6px;line-height:15.6px;color:#222;">4</div>
<div style="left:1084.27px;top:305.79px;font-size:15.6px;line-height:15.6px;color:#222;">5</div>
<div style="left:1084.19px;top:324.79px;font-size:15.6px;line-height:15.6px;color:#222;">6</div>
<div style="left:1084.27px;top:343.79px;font-size:15.6px;line-height:15.6px;color:#222;">7</div>
<div style="left:1084.27px;top:362.79px;font-size:15.6px;line-height:15.6px;color:#222;">8</div>
<div style="left:1084.27px;top:381.79px;font-size:15.6px;line-height:15.6px;color:#222;">9</div>
<div style="left:1079.63px;top:400.79px;font-size:15.6px;line-height:15.6px;color:#222;">10</div>
<div style="left:1080.29px;top:419.79px;font-size:15.6px;line-height:15.6px;color:#222;">11</div>
<div style="left:1079.75px;top:438.79px;font-size:15.6px;line-height:15.6px;color:#222;">12</div>
<div style="left:1079.67px;top:457.79px;font-size:15.6px;line-height:15.6px;color:#222;">13</div>
<div style="left:1079.55px;top:476.79px;font-size:15.6px;line-height:15.6px;color:#222;">14</div>
<div style="left:1079.67px;top:495.79px;font-size:15.6px;line-height:15.6px;color:#222;">15</div>
<div style="left:67.56px;top:264.69px;font-size:15.6px;line-height:15.6px;color:#000;transform:scaleX(0.9500);transform-origin:0 0;">=AVERAGE(B3:E3)</div>
<div style="left:211.56px;top:264.69px;font-size:15.6px;line-height:15.6px;color:#000;transform:scaleX(0.9500);transform-origin:0 0;">=SUM(B3:E3)</div>
<div style="left:67.56px;top:284.69px;font-size:15.6px;line-height:15.6px;color:#000;transform:scaleX(0.9500);transform-origin:0 0;">=AVERAGE(B4:E4)</div>
<div style="left:211.56px;top:284.69px;font-size:15.6px;line-height:15.6px;color:#000;transform:scaleX(0.9500);transform-origin:0 0;">=SUM(B4:E4)</div>
<div style="left:67.56px;top:304.69px;font-size:15.6px;line-height:15.6px;color:#000;transform:scaleX(0.9500);transform-origin:0 0;">=AVERAGE(B5:E5)</div>
<div style="left:211.56px;top:304.69px;font-size:15.6px;line-height:15.6px;color:#000;transform:scaleX(0.9500);transform-origin:0 0;">=SUM(B5:E5)</div>
<div style="left:355.63px;top:264.69px;font-size:15.6px;line-height:15.6px;color:#000;transform:scaleX(0.9500);transform-origin:0 0;">900</div>
<div style="left:355.56px;top:284.69px;font-size:15.6px;line-height:15.6px;color:#000;transform:scaleX(0.9500);transform-origin:0 0;">790</div>
<div style="left:355.56px;top:304.69px;font-size:15.6px;line-height:15.6px;color:#000;transform:scaleX(0.9500);transform-origin:0 0;">=E3-E4</div>
<div style="left:499.71px;top:264.69px;font-size:15.6px;line-height:15.6px;color:#000;transform:scaleX(0.9500);transform-origin:0 0;">500</div>
<div style="left:500.00px;top:284.69px;font-size:15.6px;line-height:15.6px;color:#000;transform:scaleX(0.9500);transform-origin:0 0;">420</div>
<div style="left:499.56px;top:304.69px;font-size:15.6px;line-height:15.6px;color:#000;transform:scaleX(0.9500);transform-origin:0 0;">=D3-D4</div>
<div style="left:643.71px;top:264.69px;font-size:15.6px;line-height:15.6px;color:#000;transform:scaleX(0.9500);transform-origin:0 0;">800</div>
<div style="left:643.56px;top:284.69px;font-size:15.6px;line-height:15.6px;color:#000;transform:scaleX(0.9500);transform-origin:0 0;">600</div>
<div style="left:643.56px;top:304.69px;font-size:15.6px;line-height:15.6px;color:#000;transform:scaleX(0.9500);transform-origin:0 0;">=C3-C4</div>
<div style="left:787.56px;top:264.69px;font-size:15.6px;line-height:15.6px;color:#000;transform:scaleX(0.9500);transform-origin:0 0;">600</div>
<div style="left:788.00px;top:284.69px;font-size:15.6px;line-height:15.6px;color:#000;transform:scaleX(0.9500);transform-origin:0 0;">450</div>
<div style="left:787.56px;top:304.69px;font-size:15.6px;line-height:15.6px;color:#000;transform:scaleX(0.9500);transform-origin:0 0;">=B3-B4</div>
<svg style="position:absolute;left:0px;top:0px;pointer-events:none" width="1103" height="566" viewBox="0 0 1103 566"><g fill="#000" fill-rule="evenodd"><path d="M151.47 245.90 151.15 245.90 150.44 246.17 150.12 246.44 149.87 246.97 150.25 251.13 150.44 255.15 150.70 255.35 151.47 255.28 151.72 255.08 151.79 248.31 152.17 247.98 152.24 247.64 151.72 246.10ZM148.46 246.10 148.20 245.90 146.60 246.77 146.48 246.97 147.37 252.06 147.44 253.14 146.92 253.27 146.16 253.20 145.77 252.74 145.07 250.86 144.75 250.32 144.36 250.12 143.85 250.12 143.08 250.46 142.44 251.06 141.74 252.33 141.48 253.27 140.20 253.27 140.14 253.14 140.46 252.74 140.78 251.86 140.78 251.26 140.46 250.46 139.88 249.85 138.92 249.45 137.84 249.45 136.75 249.79 136.11 250.12 135.66 250.59 135.47 251.06 135.47 251.53 135.72 252.13 136.04 252.33 136.24 252.27 137.07 253.20 136.04 253.34 134.96 253.27 134.38 252.74 133.93 251.73 133.16 249.05 132.91 248.98 132.46 249.18 132.14 249.52 131.88 250.12 131.95 251.19 132.27 252.13 132.84 253.27 132.40 253.41 131.05 253.41 130.03 252.94 129.71 253.00 129.32 253.81 129.32 254.54 129.52 254.95 129.84 255.21 130.73 255.48 132.46 255.35 133.80 254.81 135.02 255.35 136.04 255.35 137.07 255.15 138.28 254.61 139.05 255.01 140.40 255.35 141.55 255.35 142.44 254.95 143.28 255.28 144.43 255.48 145.26 255.42 145.45 255.08 146.09 255.35 146.99 255.35 147.88 255.08 148.40 254.34 148.65 253.20ZM142.83 252.94 143.92 252.13 144.30 253.41 143.66 253.34ZM137.71 251.46 138.80 251.46 139.05 251.80 138.99 252.20 138.60 252.67 137.58 251.60ZM127.60 245.90 126.57 246.24 126.19 246.70 126.00 247.24 126.06 248.25 127.34 255.75 126.70 256.29 125.87 256.69 125.04 256.82 123.95 256.76 123.69 256.62 123.18 255.95 123.18 253.87 122.73 253.74 122.28 253.81 121.96 255.08 121.96 256.76 122.28 257.69 122.54 258.10 123.12 258.56 123.95 258.83 125.23 258.83 126.38 258.50 127.60 257.69 128.36 256.49 128.56 255.68 128.56 254.61 127.98 248.25 128.30 247.98 128.36 247.71 127.85 246.10Z"/><path d="M285.34 256.29 285.13 256.36 284.13 257.36 284.06 257.71 285.13 258.78 285.41 258.85 286.27 258.14 286.55 257.79 286.62 257.43 285.63 256.36ZM262.36 249.11 261.57 249.40 260.86 250.04 260.29 250.96 260.00 251.82 260.07 253.09 260.57 253.95 261.28 254.52 260.57 255.80 260.43 256.36 260.43 257.86 260.57 258.43 261.07 259.35 262.00 260.13 263.57 260.63 264.64 260.63 265.85 260.20 267.85 259.14 267.99 258.92 267.99 258.57 267.78 258.07 267.57 258.00 265.14 258.50 263.50 258.50 262.78 258.35 262.21 258.07 261.78 257.64 261.64 257.36 261.64 256.72 262.07 255.94 263.21 255.08 265.57 254.09 265.92 253.81 266.21 253.24 266.21 252.38 266.07 252.03 265.78 251.89 264.07 252.53 263.07 253.09 262.43 252.88 261.78 252.31 261.50 251.60 261.93 251.32 262.50 251.18 263.43 251.18 264.50 251.46 264.71 251.39 265.00 250.82 264.85 250.32 263.71 249.40 262.93 249.11ZM301.47 246.20 301.12 246.20 300.33 246.48 299.97 246.77 299.69 247.34 300.12 251.74 300.33 256.01 300.62 256.22 301.47 256.15 301.76 255.94 301.83 248.76 302.26 248.40 302.33 248.05 301.76 246.41ZM298.12 246.41 297.83 246.20 296.05 247.12 295.90 247.34 296.90 252.74 296.98 253.88 296.40 254.02 295.55 253.95 294.91 253.02 294.26 251.32 293.98 250.89 293.55 250.68 292.55 250.82 291.41 251.67 290.62 253.02 290.34 254.02 289.05 254.02 288.98 253.95 289.55 252.95 289.48 252.67 287.55 252.45 286.13 251.89 284.41 250.82 283.77 250.61 282.63 250.61 281.70 250.96 281.20 251.46 280.99 252.10 281.20 253.02 281.34 253.24 281.63 253.31 282.70 252.81 283.63 252.81 284.70 253.45 284.48 253.59 282.70 254.02 280.41 254.02 279.84 253.45 279.06 251.46 278.70 250.89 278.27 250.68 277.70 250.68 276.85 251.03 276.13 251.67 275.35 253.02 275.13 253.95 274.28 254.09 273.92 252.60 273.21 251.25 272.63 250.68 272.21 250.46 271.28 250.39 270.56 250.75 269.99 251.39 269.42 252.67 269.28 254.23 269.56 255.08 269.99 255.58 270.99 256.01 272.42 256.22 271.78 256.72 270.78 257.07 269.42 257.07 268.92 256.93 268.42 257.00 268.14 257.79 268.35 258.07 269.28 258.71 270.28 259.14 270.85 259.14 271.71 258.92 272.63 258.43 273.35 257.71 274.13 256.22 275.13 256.22 276.13 255.80 277.06 256.15 278.34 256.36 279.27 256.29 279.49 255.94 280.20 256.22 282.98 256.15 284.20 255.80 286.34 254.52 286.48 254.59 286.55 254.94 287.05 255.72 288.41 256.15 290.41 256.22 291.41 255.80 292.62 256.22 294.33 256.36 294.55 256.29 294.76 255.94 295.48 256.22 296.48 256.22 297.47 255.94 298.05 255.16 298.33 253.95ZM291.84 253.66 293.05 252.81 293.48 254.16 292.76 254.09ZM276.56 253.66 277.77 252.81 278.20 254.16 277.49 254.09ZM270.56 253.09 271.21 252.53 271.64 252.60 272.28 253.17 272.71 253.95 271.99 254.02 270.99 253.81 270.64 253.52Z"/><path d="M1056.89 277.01 1056.69 277.08 1055.75 278.02 1055.68 278.36 1056.69 279.37 1056.96 279.43 1057.76 278.76 1058.03 278.42 1058.10 278.09 1057.16 277.08ZM1054.33 277.75 1053.46 276.81 1053.26 276.74 1053.06 276.81 1052.25 277.62 1051.65 277.01 1051.24 277.01 1050.37 277.89 1050.30 278.16 1051.11 279.03 1051.51 279.16 1051.71 279.10 1052.39 278.36 1052.99 278.90 1053.46 278.90 1054.07 278.29ZM1038.61 270.09 1038.27 270.03 1037.60 270.43 1036.93 271.37 1036.99 271.97 1037.87 273.59 1036.25 274.12 1034.84 274.33 1033.03 274.33 1032.09 274.12 1031.82 273.99 1031.21 273.32 1031.08 272.78 1031.08 271.71 1030.81 271.57 1030.14 271.64 1029.80 272.85 1029.80 273.86 1030.20 275.07 1030.88 275.80 1031.55 276.14 1032.69 276.41 1034.17 276.41 1035.98 276.14 1037.73 275.60 1038.54 275.20 1039.01 274.33 1039.21 273.45ZM1035.92 270.36 1035.04 269.42 1034.84 269.35 1034.64 269.42 1033.83 270.23 1033.23 269.62 1032.82 269.62 1031.95 270.50 1031.88 270.76 1032.69 271.64 1033.09 271.77 1033.30 271.71 1033.97 270.97 1034.57 271.50 1035.04 271.50 1035.65 270.90ZM1069.53 266.80 1069.19 266.80 1068.45 267.07 1068.11 267.34 1067.85 267.88 1068.25 272.04 1068.45 276.07 1068.72 276.27 1069.53 276.21 1069.80 276.01 1069.86 269.22 1070.27 268.88 1070.33 268.55 1069.80 267.00ZM1040.69 267.88 1041.43 274.66 1041.70 275.27 1042.24 275.87 1043.04 276.21 1045.06 276.21 1047.01 275.54 1047.41 275.80 1048.69 276.21 1051.04 276.27 1052.18 276.01 1052.86 275.54 1053.53 276.01 1054.07 276.21 1055.34 276.27 1056.28 276.01 1056.82 275.54 1057.23 275.87 1058.30 276.27 1059.11 276.27 1060.05 275.87 1061.19 276.27 1062.80 276.41 1063.01 276.34 1063.21 276.01 1063.88 276.27 1064.75 276.27 1065.69 276.01 1066.17 275.40 1066.43 274.66 1066.50 273.05 1066.30 267.00 1066.03 266.80 1064.69 267.47 1064.22 267.88 1065.29 273.99 1064.69 274.19 1064.08 274.19 1063.75 273.92 1063.34 273.25 1062.74 271.64 1062.47 271.23 1062.06 271.03 1061.53 271.03 1060.45 271.57 1059.71 272.44 1059.31 273.25 1059.11 274.12 1058.77 274.26 1058.03 274.19 1057.56 273.99 1058.10 272.65 1058.03 272.51 1057.49 272.31 1056.75 272.44 1056.02 273.72 1055.68 274.06 1055.34 274.19 1054.13 274.19 1053.66 273.99 1054.07 273.12 1054.13 272.65 1054.00 272.44 1053.60 272.31 1052.86 272.44 1052.52 272.85 1052.05 273.79 1051.58 274.12 1050.30 274.26 1048.96 274.19 1048.89 274.06 1049.23 273.65 1049.56 272.78 1049.43 271.77 1049.23 271.37 1048.62 270.76 1047.61 270.36 1046.13 270.43 1044.66 271.03 1044.18 271.50 1043.98 271.97 1043.98 272.44 1044.25 273.05 1044.59 273.25 1044.79 273.18 1045.60 273.99 1045.60 274.19 1043.38 274.19 1042.97 273.92 1042.77 267.00 1042.50 266.80 1041.03 267.54ZM1060.45 273.86 1061.59 273.05 1062.00 274.33 1061.33 274.26ZM1046.34 272.38 1047.48 272.38 1047.75 272.71 1047.68 273.12 1047.28 273.59 1046.20 272.51Z"/><path d="M1069.68 291.02 1069.33 291.08 1068.83 291.39 1068.27 292.12 1068.27 292.85 1068.41 293.22 1069.75 295.17 1069.47 295.72 1068.69 296.39 1068.12 296.64 1065.57 296.64 1065.29 297.19 1065.36 297.43 1065.86 297.80 1067.34 298.47 1068.27 298.41 1069.40 297.98 1070.11 297.37 1070.82 296.21 1071.03 295.35 1071.03 294.32 1069.97 291.20ZM1060.90 291.08 1060.61 291.02 1060.12 291.20 1059.55 291.63 1059.19 292.12 1059.19 292.85 1059.97 294.13 1059.90 294.26 1058.91 294.13 1058.13 293.83 1058.63 292.61 1058.56 292.24 1057.85 292.06 1057.14 292.30 1056.29 294.07 1056.01 294.19 1054.80 294.13 1054.45 292.42 1054.23 292.36 1053.38 292.73 1052.67 293.52 1052.53 294.26 1053.67 296.39 1052.89 296.88 1052.04 297.19 1050.27 297.31 1049.63 297.12 1049.20 296.76 1048.99 296.27 1048.99 295.35 1049.13 295.05 1049.06 294.62 1048.56 294.50 1048.07 294.56 1047.71 295.78 1047.71 297.19 1048.21 298.28 1048.78 298.77 1049.63 299.08 1051.68 299.08 1053.10 298.65 1054.30 297.80 1054.87 296.94 1055.08 296.09 1056.71 295.96 1057.14 295.84 1057.42 295.54 1059.48 296.03 1060.90 296.03 1061.53 294.44 1061.53 293.71ZM1064.58 287.36 1064.23 287.36 1063.45 287.60 1063.09 287.85 1062.81 288.33 1063.23 292.12 1063.45 295.78 1063.73 295.96 1064.58 295.90 1064.86 295.72 1064.93 289.56 1065.36 289.25 1065.43 288.94 1064.86 287.54ZM1042.40 287.36 1042.04 287.36 1041.26 287.60 1040.91 287.85 1040.63 288.33 1041.05 292.12 1041.26 295.78 1041.55 295.96 1042.40 295.90 1042.68 295.72 1042.75 289.56 1043.18 289.25 1043.25 288.94 1042.68 287.54ZM1027.66 288.21 1027.59 288.58 1028.30 294.26 1028.65 295.05 1029.22 295.60 1030.35 295.96 1031.41 295.96 1032.41 295.60 1033.61 295.96 1035.31 296.09 1035.52 296.03 1035.74 295.72 1036.45 295.96 1037.44 295.96 1038.43 295.72 1038.71 295.48 1039.00 295.05 1039.28 294.01 1039.14 288.27 1039.00 287.42 1038.57 287.42 1037.01 288.15 1036.87 288.33 1038.01 293.89 1037.37 294.07 1036.66 294.07 1036.30 293.83 1035.88 293.22 1035.24 291.75 1034.96 291.39 1034.53 291.20 1033.54 291.33 1032.41 292.06 1031.63 293.22 1031.34 294.07 1030.42 294.07 1030.00 293.83 1029.78 287.54 1029.50 287.36ZM1032.83 293.77 1034.04 293.03 1034.46 294.19 1033.75 294.13ZM1025.11 287.36 1023.97 287.66 1023.55 288.09 1023.34 288.58 1023.41 289.49 1024.82 296.33 1024.12 296.82 1023.19 297.19 1022.27 297.31 1021.07 297.25 1020.78 297.12 1020.22 296.51 1020.22 294.62 1019.72 294.50 1019.23 294.56 1018.87 295.72 1018.87 297.25 1019.23 298.10 1019.51 298.47 1020.15 298.89 1021.07 299.14 1022.49 299.14 1023.76 298.83 1025.11 298.10 1025.96 297.00 1026.17 296.27 1026.17 295.29 1025.53 289.49 1025.89 289.25 1025.96 289.01 1025.39 287.54ZM1064.65 284.12 1064.23 284.00 1063.59 284.12 1062.95 284.67 1062.74 285.16 1062.74 285.47 1062.95 285.89 1062.67 286.14 1062.81 286.87 1063.09 286.93 1063.94 286.56 1065.15 286.26 1065.22 285.47 1064.93 285.28 1065.01 284.73Z"/><path d="M1057.56 311.50 1057.20 311.43 1056.34 311.96 1055.91 312.62 1055.91 313.41 1056.05 313.81 1057.42 315.92 1057.13 316.51 1056.34 317.24 1055.77 317.50 1053.18 317.50 1052.90 318.10 1052.90 318.43 1051.96 317.57 1051.46 317.57 1050.39 318.62 1050.46 318.95 1051.46 319.81 1051.96 319.81 1052.97 318.76 1052.97 318.36 1054.55 319.35 1055.55 319.48 1056.70 319.15 1057.77 318.29 1058.49 317.04 1058.71 316.12 1058.71 314.99ZM1037.33 311.50 1036.90 312.16 1036.90 312.95 1037.19 313.48 1037.55 313.54 1038.55 313.08 1039.48 313.08 1040.06 313.28 1038.62 314.34 1038.05 315.06 1037.55 316.12 1037.40 316.71 1037.40 317.83 1037.62 318.62 1038.12 319.48 1038.62 319.94 1039.34 320.34 1040.56 320.67 1041.56 320.73 1043.07 320.34 1045.29 319.35 1045.44 318.95 1045.22 318.43 1044.65 318.36 1043.86 318.56 1041.85 318.76 1040.63 318.69 1039.34 318.23 1038.84 317.77 1038.62 317.24 1038.69 316.58 1038.98 316.05 1039.77 315.26 1040.56 314.73 1041.71 314.20 1042.71 313.94 1043.71 314.01 1044.72 313.87 1045.36 312.36 1045.29 312.03 1042.93 311.96 1039.55 311.04 1038.55 311.04ZM1069.47 307.47 1069.11 307.47 1068.32 307.74 1067.96 308.00 1067.67 308.53 1068.10 312.62 1068.32 316.58 1068.61 316.78 1069.47 316.71 1069.75 316.51 1069.83 309.85 1070.26 309.52 1070.33 309.19 1069.75 307.67ZM1046.73 308.20 1046.37 308.53 1047.16 315.19 1047.44 315.79 1048.02 316.38 1048.88 316.71 1050.46 316.78 1051.82 316.45 1052.75 315.98 1053.33 314.67 1053.33 313.61 1052.83 311.30 1052.68 311.04 1052.18 311.04 1051.25 311.76 1050.96 312.22 1050.96 312.82 1051.89 314.40 1051.82 314.53 1050.03 314.80 1048.95 314.60 1048.81 314.47 1048.59 307.67 1048.31 307.47ZM1065.59 307.34 1064.88 307.28 1064.45 307.41 1063.87 307.80 1063.66 308.20 1063.59 308.79 1064.09 311.50 1063.94 311.83 1061.72 309.85 1060.50 308.99 1060.29 308.93 1059.86 309.12 1059.28 309.92 1059.28 310.71 1059.78 311.43 1060.36 311.70 1061.00 311.76 1062.15 312.49 1063.37 313.48 1061.72 314.99 1061.00 315.06 1060.72 316.64 1060.86 316.84 1062.65 316.91 1065.52 316.71 1065.88 316.51 1066.38 315.39 1066.38 314.93 1065.16 313.21 1065.74 311.76 1065.74 309.59 1066.17 309.19ZM1064.66 314.73 1064.45 314.86 1063.94 314.80 1064.30 314.40ZM1060.64 305.23 1060.21 305.10 1059.57 305.23 1058.92 305.83 1058.71 306.35 1058.71 306.68 1058.92 307.14 1058.64 307.41 1058.78 308.20 1059.07 308.27 1059.93 307.87 1061.15 307.54 1061.22 306.68 1060.93 306.49 1061.00 305.89Z"/></g></svg>
<div style="left:22px;top:522px;width:15px;height:15px;background:#fff;box-sizing:border-box;border:1px solid #ababab"></div>
<svg style="position:absolute;left:22px;top:522px;" width="15" height="15" viewBox="0 0 15 15"><path d="M9.5 3.8 V11.2 L5.5 7.5 Z" fill="#777"/></svg>
<div style="left:37px;top:522px;width:112px;height:15px;background:#dcdddd"></div>
<div style="left:149px;top:522px;width:261px;height:15px;background:#fff;box-sizing:border-box;border:1px solid #ababab"></div>
<div style="left:410px;top:522px;width:15px;height:15px;background:#fff;box-sizing:border-box;border:1px solid #ababab"></div>
<svg style="position:absolute;left:410px;top:522px;" width="15" height="15" viewBox="0 0 15 15"><path d="M5.5 3.8 V11.2 L9.5 7.5 Z" fill="#777"/></svg>
<div style="left:440px;top:524px;width:2px;height:2px;background:#a8a8a8"></div>
<div style="left:440px;top:528.5px;width:2px;height:2px;background:#a8a8a8"></div>
<div style="left:440px;top:533px;width:2px;height:2px;background:#a8a8a8"></div>
<svg style="position:absolute;left:885px;top:520px;" width="18" height="18" viewBox="0 0 18 18"><circle cx="9" cy="9" r="7.6" fill="none" stroke="#777" stroke-width="1.2"/><path d="M9 5 V13 M5 9 H13" stroke="#666" stroke-width="1.6"/></svg>
<div style="left:937px;top:515px;width:65px;height:25px;background:#fff;box-sizing:border-box;border-left:1px solid #9a9a9a;border-right:1px solid #9a9a9a"></div>
<div style="left:937px;top:538px;width:65px;height:2px;background:#217346"></div>
<div style="left:949.93px;top:521.59px;font-size:13.6px;line-height:13.6px;color:#217346;font-weight:bold;transform:scaleX(0.8960);transform-origin:0 0;">Sheet1</div>
<svg style="position:absolute;left:1038px;top:523px;" width="10" height="12" viewBox="0 0 10 12"><path d="M7.5 2 V10 L3 6 Z" fill="#c6c6c6"/></svg>
<svg style="position:absolute;left:1067px;top:523px;" width="10" height="12" viewBox="0 0 10 12"><path d="M2.5 2 V10 L7 6 Z" fill="#c6c6c6"/></svg>
<div style="left:1px;top:543px;width:1101px;height:1px;background:#c6c6c6"></div>
<div style="left:1px;top:544px;width:1101px;height:22px;background:#f3f3f3"></div>
<div style="left:7.53px;top:548.59px;font-size:11px;line-height:11px;color:#444;transform:scaleX(0.9867);transform-origin:0 0;">Ready</div>
<div style="left:799px;top:544px;width:38px;height:21px;background:#d4d4d4"></div>
<svg style="position:absolute;left:810px;top:546px;" width="16" height="15" viewBox="0 0 16 15"><g fill="none" stroke="#555" stroke-width="1.3"><rect x="1.5" y="1.5" width="12.5" height="12"/><path d="M5.7 1.5 V13.5 M9.8 1.5 V13.5 M1.5 5.5 H14 M1.5 9.5 H14"/></g></svg>
<svg style="position:absolute;left:848px;top:546px;" width="16" height="15" viewBox="0 0 16 15"><g fill="none" stroke="#6a6a6a" stroke-width="1.2"><rect x="1.5" y="1.5" width="13" height="12"/><rect x="4.5" y="3.5" width="7" height="8"/><path d="M6 5.5 H10 M6 7.5 H10 M6 9.5 H10"/></g></svg>
<svg style="position:absolute;left:886px;top:546px;" width="16" height="15" viewBox="0 0 16 15"><g fill="none" stroke="#6a6a6a" stroke-width="1.2"><rect x="1.5" y="1.5" width="13" height="12"/><path d="M5.5 1.5 V8.5 M9.5 1.5 V8.5 H1.5"/></g></svg>
<div style="left:918px;top:553px;width:6px;height:2px;background:#555"></div>
<div style="left:928px;top:553.5px;width:100px;height:1px;background:#a0a0a0"></div>
<div style="left:976px;top:548px;width:4px;height:11px;background:#666"></div>
<svg style="position:absolute;left:1031px;top:547px;" width="11" height="13" viewBox="0 0 11 13"><path d="M5.5 2 V11 M1 6.5 H10" stroke="#555" stroke-width="1.8"/></svg>
<div style="left:1054.70px;top:549.19px;font-size:11px;line-height:11px;color:#444;transform:scaleX(0.9685);transform-origin:0 0;">100%</div>
<div style="left:0px;top:66px;width:1px;height:500px;background:#217346"></div>
<div style="left:1102px;top:66px;width:1px;height:500px;background:#217346"></div>
<div style="left:0px;top:565px;width:1103px;height:1px;background:#217346"></div>
</body></html>
